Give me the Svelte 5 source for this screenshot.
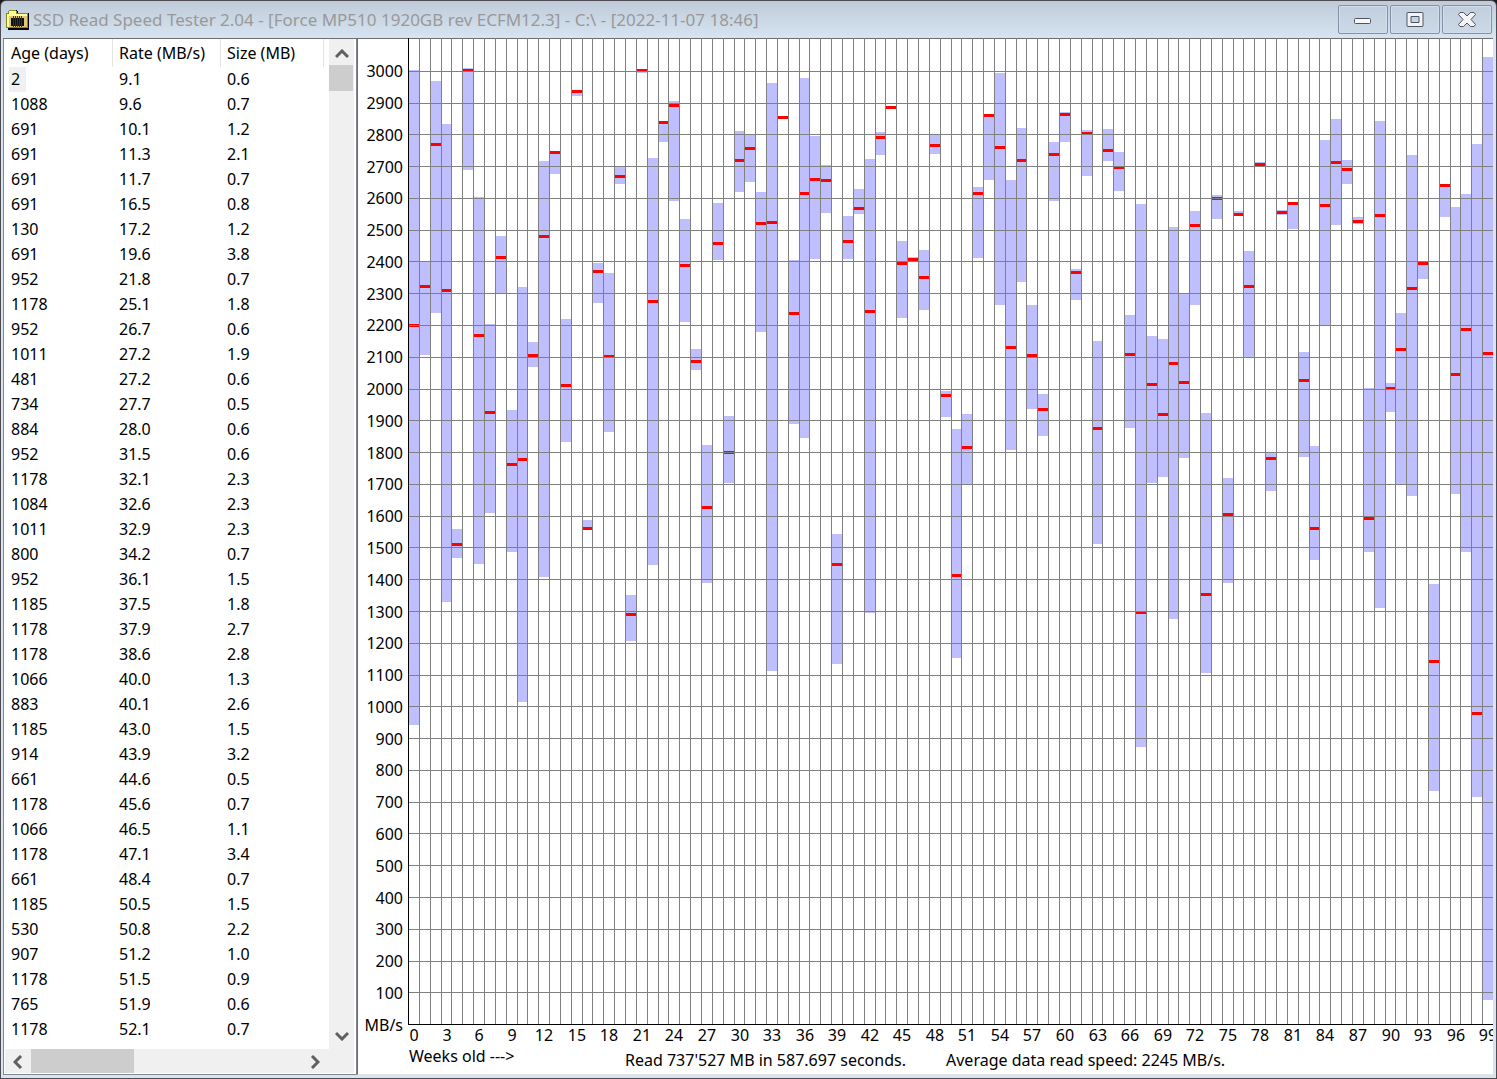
<script>
  const title = 'SSD Read Speed Tester 2.04 - [Force MP510 1920GB rev ECFM12.3] - C:\\ - [2022-11-07 18:46]';

  const columns = ['Age (days)', 'Rate (MB/s)', 'Size (MB)'];

  const files = [
    ['2', '9.1', '0.6'], ['1088', '9.6', '0.7'], ['691', '10.1', '1.2'], ['691', '11.3', '2.1'],
    ['691', '11.7', '0.7'], ['691', '16.5', '0.8'], ['130', '17.2', '1.2'], ['691', '19.6', '3.8'],
    ['952', '21.8', '0.7'], ['1178', '25.1', '1.8'], ['952', '26.7', '0.6'], ['1011', '27.2', '1.9'],
    ['481', '27.2', '0.6'], ['734', '27.7', '0.5'], ['884', '28.0', '0.6'], ['952', '31.5', '0.6'],
    ['1178', '32.1', '2.3'], ['1084', '32.6', '2.3'], ['1011', '32.9', '2.3'], ['800', '34.2', '0.7'],
    ['952', '36.1', '1.5'], ['1185', '37.5', '1.8'], ['1178', '37.9', '2.7'], ['1178', '38.6', '2.8'],
    ['1066', '40.0', '1.3'], ['883', '40.1', '2.6'], ['1185', '43.0', '1.5'], ['914', '43.9', '3.2'],
    ['661', '44.6', '0.5'], ['1178', '45.6', '0.7'], ['1066', '46.5', '1.1'], ['1178', '47.1', '3.4'],
    ['661', '48.4', '0.7'], ['1185', '50.5', '1.5'], ['530', '50.8', '2.2'], ['907', '51.2', '1.0'],
    ['1178', '51.5', '0.9'], ['765', '51.9', '0.6'], ['1178', '52.1', '0.7']
  ];

  // one entry per week: top of range, bottom of range, average (plot rows)
  const weeks = [
    [32, 687, 287], [223, 317, 248], [43, 275, 106], [86, 564, 252], [491, 520, 506],
    [30, 132, 32], [159, 526, 297], [286, 475, 374], [198, 255, 219], [372, 514, 426],
    [249, 664, 421], [304, 329, 317], [123, 539, 198], [113, 136, 114], [281, 404, 347],
    [52, 58, 53], [482, 492, 490], [225, 265, 233], [235, 394, 318], [129, 146, 138],
    [557, 603, 576], [31, 35, 32], [120, 527, 263], [83, 104, 84], [63, 163, 67],
    [181, 284, 227], [311, 332, 323], [407, 545, 469], [165, 222, 205], [378, 445, 414],
    [93, 154, 122], [97, 144, 110], [154, 294, 185], [45, 633, 184], [78, 81, 79],
    [222, 386, 275], [40, 400, 155], [98, 221, 141], [127, 175, 142], [496, 626, 526],
    [178, 221, 203], [151, 176, 170], [121, 575, 273], [94, 117, 99], [68, 71, 69],
    [203, 280, 225], [219, 223, 221], [212, 272, 239], [97, 116, 107], [353, 379, 357],
    [391, 620, 537], [376, 446, 409], [149, 220, 155], [76, 142, 77], [35, 267, 109],
    [142, 412, 309], [90, 244, 122], [267, 371, 317], [356, 398, 371], [104, 163, 116],
    [74, 104, 76], [231, 262, 234], [92, 138, 95], [303, 506, 390], [91, 123, 112],
    [114, 153, 129], [277, 390, 316], [166, 709, 574], [298, 445, 346], [301, 439, 376],
    [189, 581, 325], [255, 420, 344], [173, 267, 187], [375, 635, 556], [157, 181, 160],
    [440, 545, 476], [173, 178, 176], [213, 319, 248], [124, 128, 126], [415, 453, 420],
    [172, 177, 174], [164, 191, 165], [314, 419, 342], [408, 522, 490], [102, 287, 167],
    [81, 187, 124], [122, 146, 131], [179, 186, 183], [350, 514, 480], [83, 570, 177],
    [345, 374, 350], [275, 446, 311], [117, 458, 250], [224, 241, 225], [546, 753, 623],
    [146, 179, 147], [169, 456, 336], [156, 514, 291], [106, 759, 675], [19, 962, 315]
  ];

  const left = 50;
  const bottom = 986;

  const weekX = (week) => left + Math.round(week * 10.85);
  const rateY = (rate) => 986.65 - rate * 0.3178;

  const rates = Array.from({ length: 30 }, (_, i) => (i + 1) * 100);
  const weekLabels = weeks.map((_, i) => i).filter((i) => i % 3 === 0);
</script>

<main class="window">
  <header class="titlebar">
    <svg class="app-icon" width="24" height="20" viewBox="0 0 24 20" shape-rendering="crispEdges" aria-hidden="true">
      <path d="M2 2V1h2V0h7v1h1v2h11v17H2z" fill="#000" />
      <path d="M0 3h2V1h1V0h7v1h1v2h11v15H0z" fill="#8a8a1c" />
      <path d="M1 4h2V1h7v3h11v13H1z" fill="#ffff9c" />
      <path d="M3 6h18v11H3z" fill="#e0c878" />
      <path d="M5 8h13v8H5z" fill="#111" />
      <path d="M7 6h1v11H7zM9 6h1v11H9zM11 6h1v11h-1zM13 6h1v11h-1zM15 6h1v11h-1z" fill="#333" />
    </svg>
    <h1>{title}</h1>
    <div class="window-buttons">
      <button type="button" aria-label="Minimize">
        <svg width="20" height="18" viewBox="0 0 20 18">
          <rect x="1.500" y="7.500" width="16" height="5" rx="1" fill="#f8f8f8" stroke="#4f5463" />
        </svg>
      </button>
      <button type="button" aria-label="Maximize">
        <svg width="20" height="18" viewBox="0 0 20 18">
          <path d="M2.500 1.500h15q.5 0 .5.5v13q0 .5-.5.5h-15q-.5 0-.5-.5V2q0-.5.5-.5zM6 5.500v6h8v-6z" fill="#f4f4f4" stroke="#4f5463" fill-rule="evenodd" />
        </svg>
      </button>
      <button type="button" aria-label="Close">
        <svg width="20" height="18" viewBox="0 0 20 18">
          <path d="M3 1.500h3.500L10 5l3.500-3.500H17l1.500 2L14 8.500l4.500 5-1.500 2h-3.500L10 12l-3.500 3.500H3l-1.500-2L6 8.500l-4.500-5z" fill="#f4f4f4" stroke="#4f5463" stroke-linejoin="round" />
        </svg>
      </button>
    </div>
  </header>

  <div class="content">
    <section class="file-panel">
      <div class="list-row">
        <div class="list">
          <table>
            <thead>
              <tr>
                {#each columns as column}
                  <th scope="col">{column}</th>
                {/each}
              </tr>
            </thead>
            <tbody>
              {#each files as file, i}
                <tr>
                  {#each file as value, c}
                    <td><span class:focused={i === 0 && c === 0}>{value}</span></td>
                  {/each}
                </tr>
              {/each}
            </tbody>
          </table>
        </div>
        <div class="scrollbar vertical">
          <button type="button" class="start" aria-label="Scroll up">
            <svg width="14" height="10" viewBox="0 0 14 10"><path d="M1 8l6-6 6 6" /></svg>
          </button>
          <div class="thumb"></div>
          <button type="button" class="end" aria-label="Scroll down">
            <svg width="14" height="10" viewBox="0 0 14 10"><path d="M1 2l6 6 6-6" /></svg>
          </button>
        </div>
      </div>
      <div class="scrollbar horizontal">
        <button type="button" aria-label="Scroll left">
          <svg width="10" height="14" viewBox="0 0 10 14"><path d="M8 1L2 7l6 6" /></svg>
        </button>
        <div class="thumb"></div>
        <button type="button" class="end" aria-label="Scroll right">
          <svg width="10" height="14" viewBox="0 0 10 14"><path d="M2 1l6 6-6 6" /></svg>
        </button>
      </div>
    </section>

    <section class="chart-panel">
      <svg class="chart" height="1009" role="img" aria-label="Read speed by file age in weeks">
        {#each weeks as [top, low, average], week}
          <rect class="range" x={weekX(week) + 1} y={top} width={weekX(week + 1) - weekX(week) - 1} height={low - top} />
          <rect class="average" x={weekX(week) + 1} y={average - 1} width={weekX(week + 1) - weekX(week) - 1} height="3" />
        {/each}

        {#each weeks as _, week}
          <rect class="grid" x={weekX(week)} y="0" width="1" height={bottom} />
        {/each}
        {#each rates as rate}
          <rect class="grid" x={left} y={Math.floor(rateY(rate))} width="100%" height="1" />
          <text x="45" y={Math.round(rateY(rate)) + 6} text-anchor="end">{rate}</text>
        {/each}

        <rect class="axis" x={left} y="0" width="1" height={bottom} />
        <rect class="axis" x={left} y={bottom} width="100%" height="1" />
        <text x="45" y={bottom + 7} text-anchor="end">MB/s</text>

        {#each weekLabels as week}
          <text x={weekX(week) + 6} y={bottom + 17} text-anchor="middle">{week}</text>
        {/each}
      </svg>
      <footer>
        <span class="axis-name">Weeks old ---&gt;</span>
        <span class="total">Read 737'527 MB in 587.697 seconds.</span>
        <span>Average data read speed: 2245 MB/s.</span>
      </footer>
    </section>
  </div>
</main>

<style>
  :global(body) {
    background: #1b1a1c;
  }

  .window {
    box-sizing: border-box;
    display: flex;
    flex-direction: column;
    min-height: 100vh;
    padding: 0 3px 3px 2px;
    border: 1px solid #4e4c50;
    border-radius: 6px 6px 0 0;
    background: linear-gradient(#bfcbd9, #d7e4f1 38px);
    color: #000;
    font-family: 'Noto Sans', 'DejaVu Sans', sans-serif;
    font-size: 16px;
  }

  .titlebar {
    display: flex;
    align-items: center;
    height: 37px;
    padding: 0 1px 0 3px;
  }

  .app-icon {
    flex: none;
    margin-right: 3px;
  }

  h1 {
    flex: 1;
    min-width: 0;
    margin: 0;
    overflow: hidden;
    color: #999;
    font-size: 17px;
    font-weight: 400;
    line-height: 36px;
    white-space: nowrap;
  }

  .window-buttons {
    display: flex;
    gap: 2px;
  }

  .window-buttons button {
    display: flex;
    align-items: center;
    justify-content: center;
    width: 50px;
    height: 29px;
    padding: 0;
    border: 1px solid #8492a9;
    border-radius: 2px;
    background: linear-gradient(#c1cedd, #ccd9e7);
    box-shadow: inset 0 0 0 1px #d3deea;
  }

  .content {
    display: flex;
    flex: 1;
    border-top: 1px solid #6e6e72;
  }

  .file-panel {
    box-sizing: border-box;
    display: flex;
    flex: none;
    flex-direction: column;
    width: 354px;
    padding: 0 2px 1px 1px;
    border: 1px solid #828790;
    border-top: 0;
    background: #fff;
  }

  .list-row {
    display: flex;
    flex: 1;
  }

  .list {
    flex: 1;
    overflow: hidden;
  }

  table {
    width: 319px;
    border-collapse: collapse;
    table-layout: fixed;
  }

  th,
  td {
    box-sizing: border-box;
    width: 108px;
    padding: 0 0 0 4px;
    font-weight: 400;
    text-align: left;
    white-space: nowrap;
  }

  th {
    height: 28px;
    padding: 1px 0 0 6px;
    box-shadow: inset -1px 0 #e5e5e5;
    line-height: 27px;
  }

  th:last-child {
    width: 103px;
  }

  td {
    height: 25px;
    line-height: 25px;
  }

  td span {
    display: inline-block;
    padding: 0 6px 0 2px;
    vertical-align: top;
  }

  .focused {
    background: #f0f0f0;
  }

  .scrollbar {
    display: flex;
    background: #f0f0f0;
  }

  .scrollbar button {
    display: flex;
    align-items: center;
    justify-content: center;
    width: 25px;
    height: 26px;
    padding: 0;
    border: 0;
    background: none;
  }

  .scrollbar path {
    fill: none;
    stroke: #606060;
    stroke-width: 3;
  }

  .vertical {
    flex-direction: column;
    width: 25px;
  }

  .vertical .start {
    padding-top: 4px;
  }

  .vertical .thumb {
    height: 26px;
    margin-right: 1px;
    background: #cdcdcd;
  }

  .vertical .end {
    margin-top: auto;
  }

  .horizontal {
    height: 24px;
  }

  .horizontal .thumb {
    width: 103px;
    margin-left: 1px;
    background: #cdcdcd;
  }

  .horizontal .end {
    margin: 0 27px 0 auto;
  }

  .chart-panel {
    display: flex;
    flex: 1;
    flex-direction: column;
    min-width: 0;
    margin-top: -1px;
    border-left: 1px solid #6e6e72;
    border-bottom: 1px solid #e3e3e3;
    background: linear-gradient(#6e6e72 1px, #fff 1px);
  }

  .chart {
    display: block;
    width: 100%;
    shape-rendering: crispEdges;
  }

  .range {
    fill: #bfbfff;
  }

  .average {
    fill: #f00;
  }

  .grid {
    fill: #808080;
  }

  .axis {
    fill: #000;
  }

  footer {
    display: flex;
    align-items: center;
    padding-left: 51px;
    line-height: 18px;
    white-space: nowrap;
  }

  .axis-name {
    width: 216px;
    padding-bottom: 8px;
  }

  .total {
    width: 321px;
  }
</style>
